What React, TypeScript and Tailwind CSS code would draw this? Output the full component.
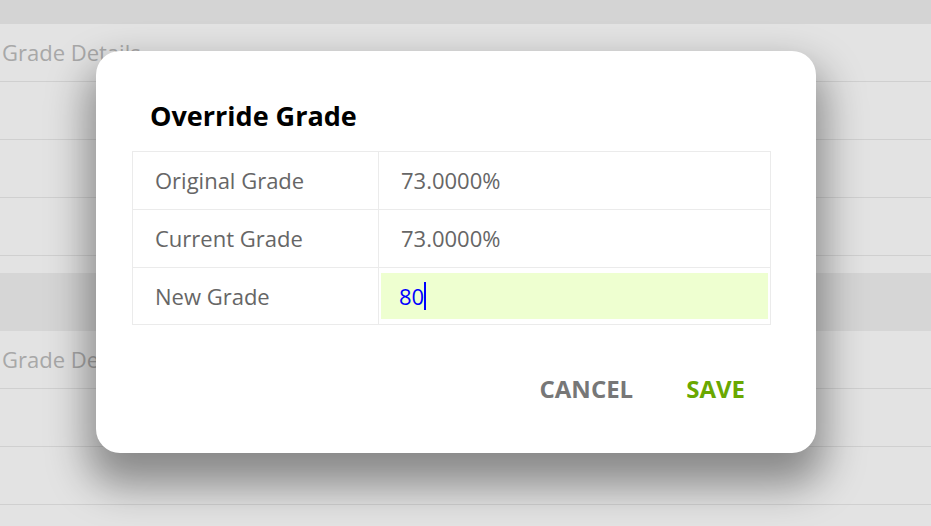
import { useState } from "react";

const font = { fontFamily: '"Open Sans", "Noto Sans", Arial, sans-serif' };

function BgRow({ label, dark }: { label?: string; dark?: boolean }) {
  return (
    <div
      className={`h-[58px] shrink-0 flex items-center border-b border-[#d0d0d0] ${
        dark ? "bg-[#d6d6d6]" : "bg-[#e3e3e3]"
      }`}
    >
      {label && <span className="pl-[2px] text-[22px] text-[#a8a8a8]">{label}</span>}
    </div>
  );
}

function InfoRow({ label, value }: { label: string; value: string }) {
  return (
    <div className="grid grid-cols-[246px_1fr] border-b border-[#ebebeb]">
      <div className="h-[57px] flex items-center pl-[22px] border-r border-[#ebebeb] text-[22px] text-[#666]">
        {label}
      </div>
      <div className="h-[57px] flex items-center pl-[22px] text-[22px] text-[#666]">{value}</div>
    </div>
  );
}

export default function App() {
  const [grade] = useState("80");

  return (
    <div className="relative w-[931px] h-[526px] overflow-hidden bg-[#e3e3e3]" style={font}>
      <div className="flex flex-col">
        <div className="h-[24px] bg-[#d4d4d4]" />
        <BgRow label="Grade Details" />
        <BgRow />
        <BgRow />
        <BgRow />
        <div className="h-[17px] bg-[#e3e3e3]" />
        <div className="h-[58px] bg-[#d6d6d6]" />
        <BgRow label="Grade Details" />
        <BgRow />
        <BgRow />
        <BgRow />
      </div>

      {/* dialog */}
      <div className="absolute left-[96px] top-[51px] w-[720px] h-[402px] bg-white rounded-[24px] shadow-[0_24px_42px_8px_rgba(0,0,0,0.4)] pl-[36px] pt-[48px]">
        <h2 className="pl-[18px] text-[27px] font-bold text-black leading-[34px] m-0">
          Override Grade
        </h2>
        <div className="w-[639px] mt-[18px] border border-[#ebebeb]">
          <InfoRow label="Original Grade" value="73.0000%" />
          <InfoRow label="Current Grade" value="73.0000%" />
          <div className="grid grid-cols-[246px_1fr]">
            <div className="h-[56px] flex items-center pl-[22px] border-r border-[#ebebeb] text-[22px] text-[#666]">
              New Grade
            </div>
            <div className="h-[56px] pt-[5px] pb-[5px] px-[2px]">
              <div className="h-full bg-[#eeffd0] pl-[18px] flex items-center text-[22px] text-[#0000ff]">
                <span>{grade}</span>
                <span className="inline-block w-[2px] h-[28px] bg-[#0000ff]" />
              </div>
            </div>
          </div>
        </div>
        <div className="flex justify-end items-center gap-[53px] pr-[71px] mt-[52px]">
          <button type="button" className="text-[24px] font-bold text-[#777] leading-none">
            CANCEL
          </button>
          <button type="button" className="text-[24px] font-bold text-[#6aa800] leading-none">
            SAVE
          </button>
        </div>
      </div>
    </div>
  );
}
